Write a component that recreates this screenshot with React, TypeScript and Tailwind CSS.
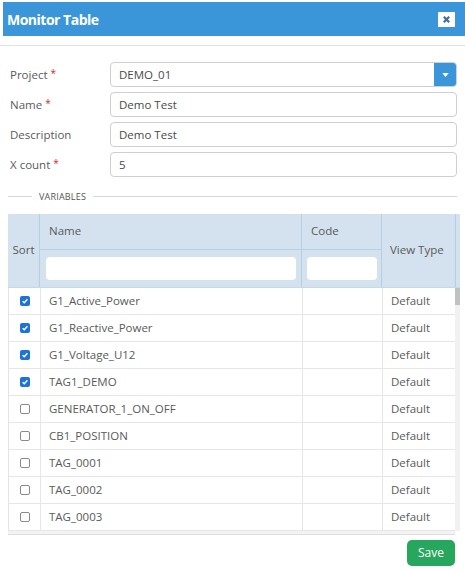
import React from 'react';

const rows = [
  { name: 'G1_Active_Power', checked: true },
  { name: 'G1_Reactive_Power', checked: true },
  { name: 'G1_Voltage_U12', checked: true },
  { name: 'TAG1_DEMO', checked: true },
  { name: 'GENERATOR_1_ON_OFF', checked: false },
  { name: 'CB1_POSITION', checked: false },
  { name: 'TAG_0001', checked: false },
  { name: 'TAG_0002', checked: false },
  { name: 'TAG_0003', checked: false },
];

const fields = [
  { label: 'Project', required: true, value: 'DEMO_01', select: true },
  { label: 'Name', required: true, value: 'Demo Test' },
  { label: 'Description', required: false, value: 'Demo Test' },
  { label: 'X count', required: true, value: '5' },
];

const CheckBox: React.FC<{ checked: boolean }> = ({ checked }) =>
  checked ? (
    <span className="flex h-[10px] w-[10px] items-center justify-center rounded-[2px] bg-[#1e74d6]">
      <svg viewBox="0 0 10 10" className="h-[8px] w-[8px]">
        <path d="M2 5.2 L4.1 7.2 L8 2.8" fill="none" stroke="white" strokeWidth="1.7" />
      </svg>
    </span>
  ) : (
    <span className="h-[10px] w-[10px] rounded-[2px] border border-[#8a8a8a] bg-white" />
  );

export default function App() {
  return (
    <div
      className="h-[571px] w-[465px] overflow-hidden bg-white pt-[2px] pl-[3px] text-[11.5px] text-[#5a5a5a]"
      style={{ fontFamily: '"Open Sans", "Noto Sans", sans-serif' }}
    >
      {/* header */}
      <div className="flex h-[34px] items-center justify-between bg-[#3a96d8] pr-[10px] pl-[4px]">
        <span className="text-[14px] font-bold tracking-[-0.5px] text-white">Monitor Table</span>
        <span className="flex h-[15px] w-[17px] items-center justify-center bg-white">
          <svg viewBox="0 0 10 10" className="h-[9px] w-[9px]">
            <path d="M2 2 L8 8 M8 2 L2 8" stroke="#3d6f99" strokeWidth="2.4" />
          </svg>
        </span>
      </div>

      <div className="-ml-[3px] mt-[9px] h-px bg-[#e2e2e2]" />

      <div className="-ml-[3px] flex flex-col gap-[5px] pt-[16px] pr-[8px] pl-[10px]">
        {fields.map((f) => (
          <div key={f.label} className="flex h-[25px] items-center">
            <div className="w-[100px] text-[#5a5a5a]">
              {f.label}
              {f.required && <span className="ml-[3px] align-top text-[10px] text-[#d9262c]">*</span>}
            </div>
            <div className="flex h-full flex-1 items-center overflow-hidden rounded-[4px] border border-[#cfcfcf]">
              <span className="flex-1 pl-[8px] text-[#4a4a4a]">{f.value}</span>
              {f.select && (
                <span className="flex h-full w-[22px] items-center justify-center bg-[#3a96d8]">
                  <svg viewBox="0 0 8 5" className="h-[4px] w-[7px]">
                    <path d="M0 0 H8 L4 5 Z" fill="white" />
                  </svg>
                </span>
              )}
            </div>
          </div>
        ))}
      </div>

      {/* variables fieldset */}
      <div className="-ml-[3px] mt-[13px] flex items-center pr-[8px] pl-[8px]">
        <div className="h-px w-[24px] bg-[#d5d5d5]" />
        <span className="px-[7px] text-[9px] tracking-[0.2px] text-[#555]">VARIABLES</span>
        <div className="h-px flex-1 bg-[#d5d5d5]" />
      </div>

      {/* table */}
      <div className="mt-[10px] ml-[5px] flex w-[452px] flex-col">
        <div className="flex">
          <div className="grid grid-cols-[32px_262px_80px_73px] grid-rows-[36px_37px] bg-[#d3e2ee]">
            <div className="row-span-2 flex items-center justify-center border-r border-[#b7cfe2]">Sort</div>
            <div className="flex items-center border-r border-b border-[#b7cfe2] pl-[9px]">Name</div>
            <div className="flex items-center border-r border-b border-[#b7cfe2] pl-[9px]">Code</div>
            <div className="row-span-2 flex items-center pl-[8px]">View Type</div>
            <div className="flex items-start border-r border-[#b7cfe2] pt-[7px] pl-[6px] pr-[5px]">
              <div className="h-[23px] w-full rounded-[4px] bg-white" />
            </div>
            <div className="flex items-start border-r border-[#b7cfe2] pt-[7px] pl-[5px] pr-[4px]">
              <div className="h-[23px] w-full rounded-[4px] bg-white" />
            </div>
          </div>
          <div className="w-[5px] border-l border-[#b7cfe2] bg-[#d3e2ee]" />
        </div>

        <div className="flex border-t border-[#c9d8e4]">
          <div className="flex w-[447px] flex-col border-l border-[#e4e4e4]">
            {rows.map((r) => (
              <div
                key={r.name}
                className="grid h-[27px] grid-cols-[31px_262px_80px_73px] border-b border-[#e6e6e6]"
              >
                <div className="flex items-center justify-center">
                  <CheckBox checked={r.checked} />
                </div>
                <div className="flex items-center border-l border-[#e6e6e6] pl-[8px]">{r.name}</div>
                <div className="border-l border-[#e6e6e6]" />
                <div className="flex items-center border-l border-[#e6e6e6] pl-[8px]">Default</div>
              </div>
            ))}
          </div>
          <div className="w-[5px] bg-[#f1f1f1]">
            <div className="h-[17px] w-full bg-[#c1c1c1]" />
          </div>
        </div>
        <div className="h-[4px] w-[447px] border-b border-[#dedede] bg-[#f3f3f3]" />
      </div>

      <div className="-ml-[3px] mt-[5px] flex justify-end pr-[10px]">
        <button className="h-[26px] w-[48px] rounded-[5px] bg-[#27a65e] text-[12px] text-white">Save</button>
      </div>
    </div>
  );
}
